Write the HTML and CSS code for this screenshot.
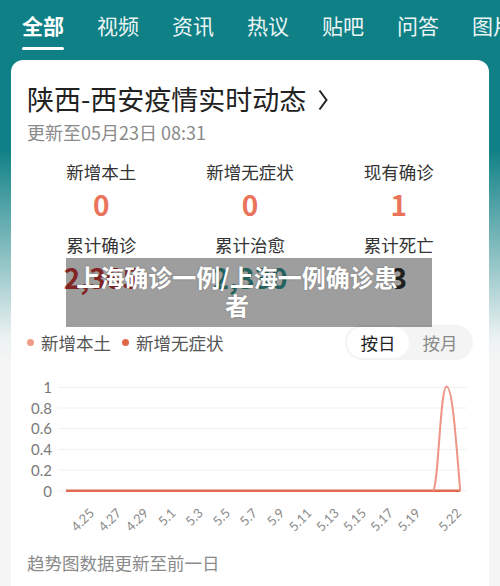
FILE: index.html
```html
<!DOCTYPE html>
<html lang="zh-CN">
<head>
<meta charset="utf-8">
<title>疫情实时动态</title>
<link rel="stylesheet" href="styles.css">
</head>
<body>
<div class="page">
  <nav class="tabs">
    <div class="tab active"><span>全部</span><i class="bar"></i></div>
    <div class="tab"><span>视频</span></div>
    <div class="tab"><span>资讯</span></div>
    <div class="tab"><span>热议</span></div>
    <div class="tab"><span>贴吧</span></div>
    <div class="tab"><span>问答</span></div>
    <div class="tab"><span>图片</span></div>
  </nav>

  <section class="card">
    <h1 class="title">陕西-西安疫情实时动态<svg class="chev" width="10" height="22" viewBox="0 0 10 22"><polyline points="1.5,1.5 8.5,11 1.5,20.5" fill="none" stroke="#222" stroke-width="2"/></svg></h1>
    <p class="updated">更新至05月23日 08:31</p>

    <div class="stats">
      <div class="stat"><div class="label">新增本土</div><div class="num orange">0</div></div>
      <div class="stat"><div class="label">新增无症状</div><div class="num orange">0</div></div>
      <div class="stat"><div class="label">现有确诊</div><div class="num orange">1</div></div>
      <div class="stat"><div class="label">累计确诊</div><div class="num red">2,365</div></div>
      <div class="stat"><div class="label">累计治愈</div><div class="num teal">2,330</div></div>
      <div class="stat"><div class="label">累计死亡</div><div class="num dark">3</div></div>
    </div>

    <div class="caption"><p>上海确诊一例/上海一例确诊患者</p></div>

    <div class="legend-row">
      <div class="legend">
        <span class="dot d1"></span><span class="ltxt">新增本土</span>
        <span class="dot d2"></span><span class="ltxt">新增无症状</span>
      </div>
      <div class="toggle">
        <span class="opt on">按日</span>
        <span class="opt">按月</span>
      </div>
    </div>

    <svg class="chart" width="478" height="170" viewBox="11 370 478 170">
      <g class="grid">
        <line x1="58" y1="387.3" x2="467" y2="387.3"/>
        <line x1="58" y1="408" x2="467" y2="408"/>
        <line x1="58" y1="428.7" x2="467" y2="428.7"/>
        <line x1="58" y1="449.4" x2="467" y2="449.4"/>
        <line x1="58" y1="470.1" x2="467" y2="470.1"/>
        <line x1="58" y1="490.8" x2="467" y2="490.8"/>
      </g>
      <g class="ylab">
        <text x="52" y="393">1</text>
        <text x="52" y="413.7">0.8</text>
        <text x="52" y="434.4">0.6</text>
        <text x="52" y="455.1">0.4</text>
        <text x="52" y="475.8">0.2</text>
        <text x="52" y="496.5">0</text>
      </g>
      <line class="zero" x1="66" y1="490.8" x2="460.2" y2="490.8"/>
      <path class="peak" d="M433,490.8 C438.5,488 440,386.5 446.6,386.5 C452.5,386.5 456,440 460.2,490.8"/>
      <g class="xlab">
        <text transform="translate(95 514) rotate(-45)">4.25</text>
        <text transform="translate(122.2 514) rotate(-45)">4.27</text>
        <text transform="translate(149.4 514) rotate(-45)">4.29</text>
        <text transform="translate(176.6 514) rotate(-45)">5.1</text>
        <text transform="translate(203.8 514) rotate(-45)">5.3</text>
        <text transform="translate(231 514) rotate(-45)">5.5</text>
        <text transform="translate(258.2 514) rotate(-45)">5.7</text>
        <text transform="translate(285.4 514) rotate(-45)">5.9</text>
        <text transform="translate(312.6 514) rotate(-45)">5.11</text>
        <text transform="translate(339.8 514) rotate(-45)">5.13</text>
        <text transform="translate(367 514) rotate(-45)">5.15</text>
        <text transform="translate(394.2 514) rotate(-45)">5.17</text>
        <text transform="translate(421.4 514) rotate(-45)">5.19</text>
        <text transform="translate(462.2 514) rotate(-45)">5.22</text>
      </g>
    </svg>

    <p class="foot">趋势图数据更新至前一日</p>
  </section>
</div>
</body>
</html>
```

FILE: styles.css
```css
* { box-sizing: border-box; }
html, body { margin: 0; padding: 0; }
body {
  width: 500px;
  height: 586px;
  overflow: hidden;
  font-family: "Noto Sans CJK SC", "Noto Sans", sans-serif;
  background: linear-gradient(to bottom, #0f8186 0, #0f8186 150px, #eef3f3 340px, #f5f5f5 365px, #f5f5f5 100%);
}
.page { width: 500px; }

.tabs {
  display: flex;
  gap: 33px;
  padding: 11px 0 10px 22px;
  height: 60px;
  overflow: hidden;
  white-space: nowrap;
}
.tab {
  display: flex;
  flex-direction: column;
  align-items: stretch;
  flex: none;
}
.tab span {
  font-size: 21px;
  line-height: 28px;
  color: #ffffff;
  opacity: 0.92;
}
.tab.active span { font-weight: 700; opacity: 1; }
.tab .bar {
  display: block;
  height: 3px;
  margin-top: 8px;
  border-radius: 2px;
  background: #ffffff;
}

.card {
  position: relative;
  margin: 0 11px;
  background: #ffffff;
  border-radius: 12px 12px 0 0;
  padding: 20px 16px 24px;
}
.title {
  margin: 0;
  display: flex;
  align-items: center;
  font-size: 27px;
  line-height: 38px;
  font-weight: 400;
  color: #222222;
}
.chev { margin-left: 12px; margin-top: 1px; }
.updated {
  margin: 0;
  font-size: 18px;
  line-height: 28px;
  color: #8a8a8a;
}

.stats {
  margin-top: 14px;
  display: grid;
  grid-template-columns: repeat(3, 1fr);
  row-gap: 12px;
  text-align: center;
}
.label {
  font-size: 17.5px;
  line-height: 24px;
  color: #333333;
}
.num {
  margin-top: 3px;
  font-size: 28px;
  line-height: 34px;
  font-weight: 700;
}
.orange { color: #e9745b; }
.red { color: #d23a3a; }
.teal { color: #3a9f98; }
.dark { color: #333333; }

.caption {
  position: absolute;
  left: 55px;
  top: 198px;
  width: 366px;
  height: 69px;
  padding: 5px 30px 0 6px;
  background: rgba(0, 0, 0, 0.38);
}
.caption p {
  margin: 0;
  text-align: center;
  color: #ffffff;
  font-size: 24px;
  line-height: 28px;
  font-weight: 700;
  text-shadow: 0 0 2px rgba(0, 0, 0, 0.25);
}

.legend-row {
  margin-top: 31px;
  display: flex;
  justify-content: space-between;
  align-items: center;
}
.legend {
  display: flex;
  align-items: center;
}
.dot {
  width: 7px;
  height: 7px;
  border-radius: 50%;
  margin-right: 7px;
}
.d1 { background: #f09a88; margin-left: 0; }
.d2 { background: #e2674a; margin-left: 11px; }
.ltxt {
  font-size: 17.5px;
  line-height: 24px;
  color: #555555;
}
.toggle {
  display: flex;
  padding: 2px;
  border-radius: 18px;
  background: #f4f4f4;
}
.opt {
  width: 62px;
  height: 31px;
  display: flex;
  align-items: center;
  justify-content: center;
  border-radius: 16px;
  font-size: 17.5px;
  color: #8a8a8a;
}
.opt.on {
  background: #ffffff;
  color: #222222;
}

.chart {
  display: block;
  margin: 10px -16px 0;
}
.grid line { stroke: #f1f1f1; stroke-width: 1; }
.ylab text {
  font-family: Lato, "Noto Sans", sans-serif;
  font-size: 15px;
  fill: #7a7a7a;
  text-anchor: end;
}
.zero { stroke: #e2694c; stroke-width: 2.5; }
.peak { fill: none; stroke: #ee9585; stroke-width: 2; stroke-linejoin: round; }
.xlab text {
  font-family: Lato, "Noto Sans", sans-serif;
  font-size: 13px;
  fill: #8a8a8a;
  text-anchor: end;
}

.foot {
  margin: 9px 0 0;
  font-size: 17.5px;
  line-height: 28px;
  color: #8a8a8a;
}
```
